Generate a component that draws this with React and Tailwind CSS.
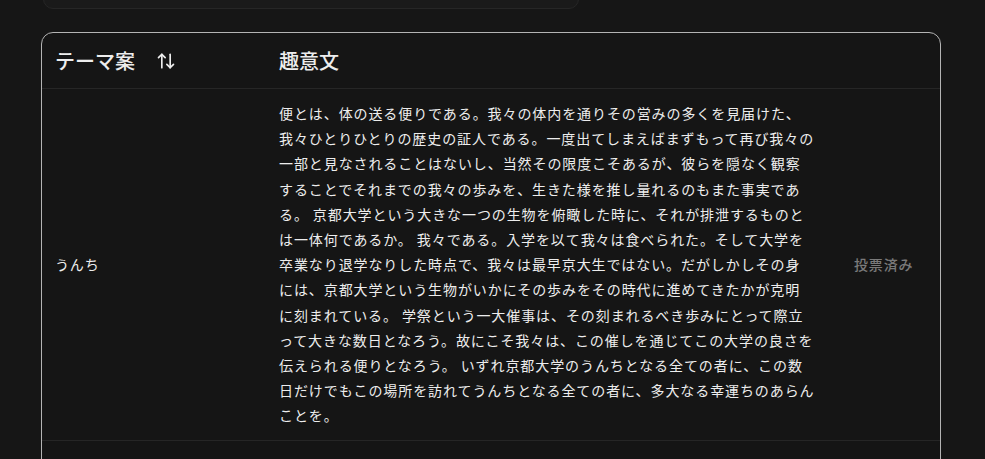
import { ArrowUpDown } from 'lucide-react'

// 趣意文は表示どおりの行で持つ
const themes = [
  {
    id: 1,
    name: 'うんち',
    lines: [
      '便とは、体の送る便りである。我々の体内を通りその営みの多くを見届けた、',
      '我々ひとりひとりの歴史の証人である。一度出てしまえばまずもって再び我々の',
      '一部と見なされることはないし、当然その限度こそあるが、彼らを隠なく観察',
      'することでそれまでの我々の歩みを、生きた様を推し量れるのもまた事実であ',
      'る。 京都大学という大きな一つの生物を俯瞰した時に、それが排泄するものと',
      'は一体何であるか。 我々である。入学を以て我々は食べられた。そして大学を',
      '卒業なり退学なりした時点で、我々は最早京大生ではない。だがしかしその身',
      'には、京都大学という生物がいかにその歩みをその時代に進めてきたかが克明',
      'に刻まれている。 学祭という一大催事は、その刻まれるべき歩みにとって際立',
      'って大きな数日となろう。故にこそ我々は、この催しを通じてこの大学の良さを',
      '伝えられる便りとなろう。 いずれ京都大学のうんちとなる全ての者に、この数',
      '日だけでもこの場所を訪れてうんちとなる全ての者に、多大なる幸運ちのあらん',
      'ことを。',
    ],
    voted: true,
  },
]

export default function App() {
  return (
    <div
      className="h-screen bg-[#161616] text-[#ededed] overflow-hidden"
      style={{ fontFamily: '"Noto Sans CJK JP", "Noto Sans", sans-serif' }}
    >
      <div className="-mt-[40px] ml-[43px] w-[536px] h-[49px] rounded-[10px] border border-[#262626] bg-[#1a1a1a]" />

      <div className="mt-[23px] ml-[41px] w-[900px] rounded-[12px] border border-[#b4b4b4] bg-[#151515]">
        <div className="flex h-[56px] items-center border-b border-[#262626]">
          <div className="flex w-[223px] items-center pl-[13px]">
            <span className="text-[20px] font-medium">テーマ案</span>
            <ArrowUpDown className="ml-[21px] h-[20px] w-[20px]" strokeWidth={2} />
          </div>
          <div className="pl-[14px] text-[20px] font-medium">趣意文</div>
        </div>

        {themes.map((t) => (
          <div key={t.id} className="flex items-center border-b border-[#262626]">
            <div className="w-[223px] pl-[13px] text-[14px] tracking-[0.06em]">{t.name}</div>
            <div className="w-[575px] py-[12px] pl-[14px]">
              <div className="text-[14px] leading-[1.8] tracking-[0.065em]">
                {t.lines.map((line, i) => (
                  <div key={i} className="whitespace-nowrap">{line}</div>
                ))}
              </div>
            </div>
            <div className="pl-[14px] text-[14px] font-medium tracking-[0.06em] text-[#7a7a7a]">
              {t.voted ? '投票済み' : '投票'}
            </div>
          </div>
        ))}
        <div className="h-[40px]" />
      </div>
    </div>
  )
}
